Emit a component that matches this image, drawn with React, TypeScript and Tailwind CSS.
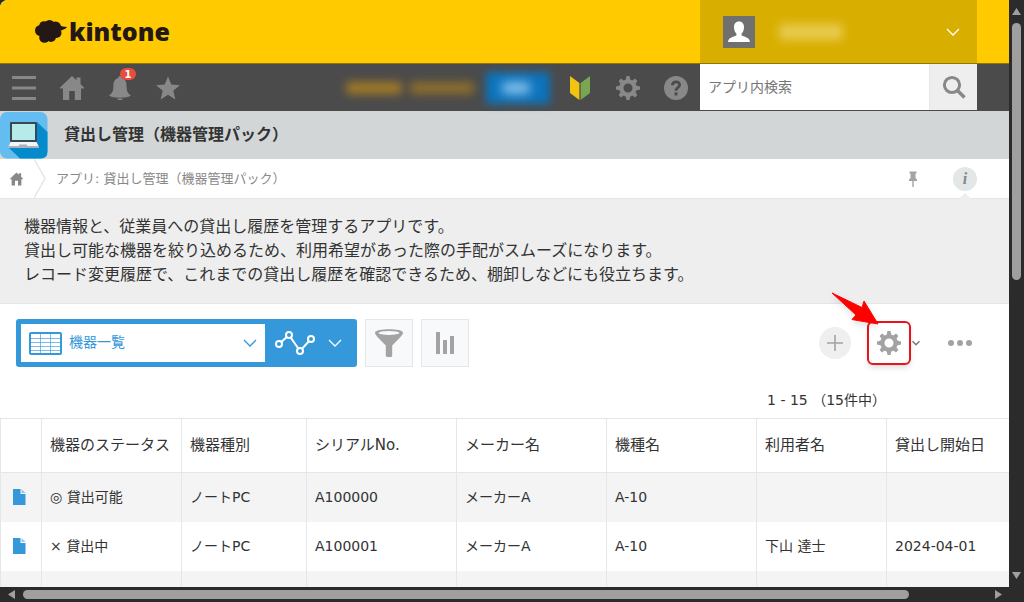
import type { ReactNode } from "react";

interface RecordRow {
  status: string;
  kind: string;
  serial: string;
  maker: string;
  model: string;
  user: string;
  startDate: string;
}

const columns = [
  { label: "機器のステータス", width: "w-[140px]" },
  { label: "機器種別", width: "w-[125px]" },
  { label: "シリアルNo.", width: "w-[150px]" },
  { label: "メーカー名", width: "w-[150px]" },
  { label: "機種名", width: "w-[150px]" },
  { label: "利用者名", width: "w-[130px]" },
  { label: "貸出し開始日", width: "w-auto" },
];

const records: RecordRow[] = [
  { status: "◎ 貸出可能", kind: "ノートPC", serial: "A100000", maker: "メーカーA", model: "A-10", user: "", startDate: "" },
  { status: "× 貸出中", kind: "ノートPC", serial: "A100001", maker: "メーカーA", model: "A-10", user: "下山 達士", startDate: "2024-04-01" },
  { status: "", kind: "", serial: "", maker: "", model: "", user: "", startDate: "" },
];

function GearIcon() {
  return (
    <svg viewBox="-12 -12 24 24" className="size-6">
      <circle r="6.6" fill="none" stroke="currentColor" strokeWidth="4.2" />
      {[0, 90, 180, 270].map((angle) => (
        <path key={angle} d="M-2.4 -8 L-1.5 -12 H1.5 L2.4 -8 Z" fill="currentColor" transform={`rotate(${angle})`} />
      ))}
      {[45, 135, 225, 315].map((angle) => (
        <path key={angle} d="M-2.4 -8 L-1.7 -11.6 H1.7 L2.4 -8 Z" fill="currentColor" transform={`rotate(${angle})`} />
      ))}
    </svg>
  );
}

function HouseIcon({ className }: { className: string }) {
  return (
    <svg viewBox="0 0 24 24" className={className} fill="currentColor">
      <path d="M12 0 L16.5 4.3 V1.5 H20.5 V8 L24 11.5 V12.5 H21 V24 H14.8 V15 H9.2 V24 H3 V12.5 H0 V11.5 Z" />
    </svg>
  );
}

function ChevronIcon({ className, strokeWidth = 1.3 }: { className: string; strokeWidth?: number }) {
  return (
    <svg viewBox="0 0 14 8" className={className} fill="none" stroke="currentColor">
      <path d="M1 1 L7 7 L13 1" strokeWidth={strokeWidth} />
    </svg>
  );
}

function FileIcon() {
  return (
    <svg viewBox="0 0 13 16" className="ml-3 block h-4 w-[13px]">
      <path d="M0 0 H7.5 V5 H12.5 V16 H0 Z" fill="#3498db" />
      <path d="M8.5 0 L12.5 4 H8.5 Z" fill="#8fc7ee" />
    </svg>
  );
}

function NavButton({ label, children }: { label: string; children: ReactNode }) {
  return (
    <button type="button" aria-label={label} className="relative flex h-[47px] w-12 items-center justify-center text-[#888]">
      {children}
    </button>
  );
}

function Header() {
  return (
    <header className="flex h-16 shrink-0 items-stretch border-b border-[#8f7510] bg-[#ffcb00]">
      <a href="#home" className="flex flex-1 items-center gap-0.5 pl-[35px] text-[#231815]">
        <svg viewBox="0 0 32 24" className="h-6 w-8" fill="currentColor">
          <circle cx="5.5" cy="10.5" r="5.500" />
          <circle cx="9" cy="6" r="4.800" />
          <circle cx="14.500" cy="5.500" r="5.500" />
          <circle cx="20.500" cy="7" r="5.500" />
          <circle cx="21.500" cy="13" r="5" />
          <circle cx="16" cy="17" r="5" />
          <circle cx="9.500" cy="17.500" r="5.300" />
          <circle cx="13" cy="12" r="7" />
          <path d="M24 5 C27 7 29 6.600 32 7 C31 8.800 29 9.200 25.500 11 Z" />
        </svg>
        <span className="font-['Open_Sans','Noto_Sans',sans-serif] text-[25px] font-extrabold">kintone</span>
      </a>
      <button type="button" aria-label="ユーザーメニュー" className="flex w-[277px] items-center bg-[#d8af00] px-[17px] pl-[23px]">
        <svg viewBox="0 0 32 32" className="size-8">
          <rect width="32" height="32" fill="#707070" />
          <path d="M16 5.5 C19.5 5.5 21 8 21 11 C21 14 20 16.4 18.6 17.6 V19.6 C22 21.2 26.6 21.6 27 26 H5 C5.4 21.6 10 21.2 13.4 19.6 V17.6 C12 16.4 11 14 11 11 C11 8 12.5 5.5 16 5.5 Z" fill="#fff" />
        </svg>
        <span className="ml-6 h-4 w-16 rounded bg-[#efd66f]/70 blur-[5px]" />
        <ChevronIcon className="ml-auto h-2 w-3.5 text-white" />
      </button>
      <div className="w-8" />
    </header>
  );
}

function NavBar() {
  return (
    <nav className="flex h-[47px] shrink-0 items-center bg-[#4b4b4b]">
      <NavButton label="メニュー">
        <svg viewBox="0 0 24 24" className="size-6" fill="currentColor">
          <path d="M0 0 H24 V3 H0 Z M0 10.5 H24 V13.5 H0 Z M0 21 H24 V24 H0 Z" />
        </svg>
      </NavButton>
      <NavButton label="ポータル">
        <HouseIcon className="size-6" />
      </NavButton>
      <NavButton label="通知">
        <svg viewBox="0 0 24 24" className="size-6" fill="currentColor">
          <path d="M12 0 C13 0 13.6 .7 13.6 1.8 C18 3.2 18.6 7 18.6 10.5 C18.6 15 19.6 17.2 23 19.6 C21 21 17 21.8 12 21.8 C7 21.8 3 21 1 19.6 C4.4 17.2 5.4 15 5.4 10.5 C5.4 7 6 3.2 10.4 1.8 C10.4 .7 11 0 12 0 Z" />
          <path d="M9 22.4 H15 C14.6 23.6 13.2 24 12 24 C10.8 24 9.4 23.6 9 22.4 Z" />
        </svg>
        <span className="absolute top-1 right-2 flex h-3 w-4 items-center justify-center rounded-full bg-[#e74c3c] text-[10px] font-bold text-white">1</span>
      </NavButton>
      <NavButton label="お気に入り">
        <svg viewBox="0 0 24 24" className="size-6" fill="currentColor">
          <path d="M12 .5 L15.3 8.6 L23.8 9.2 L17.3 14.8 L19.4 23.5 L12 18.8 L4.6 23.5 L6.7 14.8 L.2 9.2 L8.7 8.6 Z" />
        </svg>
      </NavButton>

      <div className="ml-auto flex items-center">
        <span className="mr-2 h-3 w-14 rounded bg-[#a37b26] blur-[5px]" />
        <span className="mr-3 h-3 w-16 rounded bg-[#8e6f2c] blur-[5px]" />
        <button type="button" aria-label="購入" className="mr-1.5 flex h-8 w-16 items-center justify-center bg-[#0b73bd] blur-[4px]">
          <span className="mr-1 h-3 w-7 rounded bg-[#8cc4ec] blur-[3px]" />
        </button>
        <NavButton label="はじめに">
          <svg viewBox="0 0 24 24" className="size-6">
            <path d="M2 0 L11.4 7 V24 L2 17 Z" fill="#f1c40f" />
            <path d="M22 0 L12.6 7 V24 L22 17 Z" fill="#7ba651" />
          </svg>
        </NavButton>
        <NavButton label="設定">
          <GearIcon />
        </NavButton>
        <NavButton label="ヘルプ">
          <svg viewBox="0 0 24 24" className="size-6">
            <circle cx="12" cy="12" r="12" fill="#888" />
            <path d="M8.4 9.3 C8.6 4.8 15.8 4.9 15.6 9 C15.5 11.7 12 11.4 12 14.8" fill="none" stroke="#4b4b4b" strokeWidth="2.8" />
            <rect x="10.5" y="16.4" width="3" height="3" fill="#4b4b4b" />
          </svg>
        </NavButton>
      </div>

      <form className="flex h-full w-[277px] pb-px">
        <input
          type="search"
          aria-label="アプリ内検索"
          placeholder="アプリ内検索"
          className="min-w-0 flex-1 bg-white px-2 text-sm text-[#333] placeholder:text-[#757575]"
        />
        <button type="button" aria-label="検索" className="flex w-12 items-center justify-center border-l border-[#e3e7e8] bg-[#eeeeee] text-[#888]">
          <svg viewBox="0 0 24 24" className="size-6" fill="none" stroke="currentColor">
            <circle cx="10" cy="10" r="7.6" strokeWidth="3" />
            <path d="M15.5 15.5 L22.5 22.5" strokeWidth="3.6" />
          </svg>
        </button>
      </form>
      <div className="w-8 shrink-0" />
    </nav>
  );
}

function AppTitle() {
  return (
    <div className="flex h-12 shrink-0 items-center gap-4 bg-[#d3d6d7]">
      <svg viewBox="0 0 48 48" className="size-12">
        <rect y="1" width="47.5" height="46.5" rx="7" fill="#64bdf0" />
        <path d="M37 11 L47.5 21 V40.5 Q47.5 47.5 40.5 47.5 H20 L9 37 Z" fill="#058bcb" />
        <rect x="10" y="11" width="27" height="20" rx="1" fill="#3b4657" />
        <rect x="12" y="13" width="23" height="16" fill="#b5ece8" />
        <path d="M10.500 31 H36.500 L39 36 H8.500 Z" fill="#f3f5f7" />
        <path d="M8.500 35 H39 V37 H8.500 Z" fill="#aab2bb" />
        <rect x="19" y="33.500" width="8" height="1.500" fill="#aab2bb" />
      </svg>
      <h1 className="text-base font-bold text-[#333]">貸出し管理（機器管理パック）</h1>
    </div>
  );
}

function Breadcrumb() {
  return (
    <div className="flex h-10 shrink-0 items-center border-b border-[#e3e7e8] bg-white text-[13px] text-[#888]">
      <a href="#portal" aria-label="ポータル" className="pl-2.5">
        <HouseIcon className="h-3.5 w-[13px]" />
      </a>
      <svg viewBox="0 0 12 39" className="ml-[11px] h-[39px] w-3" fill="none" stroke="#e3e7e8" strokeWidth="1.5">
        <path d="M0 0 L11 19.5 L0 39" />
      </svg>
      <a href="#app" className="ml-2.5">アプリ: 貸出し管理（機器管理パック）</a>
      <button type="button" aria-label="ピン留め" className="ml-auto">
        <svg viewBox="0 0 8 16" className="h-4 w-2" fill="#a3a3a3">
          <path d="M.5 .5 H7.500 V2.500 H6.500 V7 L8 8.500 V10 H4.700 V16 H3.300 V10 H0 V8.500 L1.500 7 V2.500 H.500 Z" />
        </svg>
      </button>
      <button type="button" aria-label="アプリの説明" className="relative mr-8 ml-9 flex size-6 items-center justify-center rounded-full bg-[#e3e7e8] font-['Liberation_Serif',serif] text-base font-bold text-[#888] italic">
        i
        <span className="absolute top-7 left-1.5 size-3 rotate-45 bg-[#eee] [clip-path:polygon(0_0,100%_0,0_100%)]" />
      </button>
    </div>
  );
}

function Toolbar() {
  return (
    <div className="flex shrink-0 items-center px-4 pt-[15px]">
      <div className="flex h-12 w-[341px] items-center rounded-[3px] bg-[#3498db] p-[5px]">
        <div className="flex h-full w-[244px] items-center bg-white px-2 text-[#3498db]">
          <svg viewBox="0 0 33 23" className="h-[23px] w-[33px]" fill="none" stroke="currentColor">
            <rect x="1" y="1" width="31" height="21" rx="1" strokeWidth="2" />
            <path d="M1 6.5 H32 M1 10.500 H32 M1 14.500 H32 M1 18.500 H32 M11.500 1 V22 M21.500 1 V22" opacity=".65" />
          </svg>
          <select aria-label="一覧" className="mb-0.5 ml-[7px] flex-1 appearance-none bg-transparent text-sm">
            <option>機器一覧</option>
          </select>
          <ChevronIcon className="h-2 w-3.5" />
        </div>
        <button type="button" aria-label="グラフ" className="flex flex-1 items-center justify-between px-2.5 text-white">
          <svg viewBox="0 0 40 24" className="h-6 w-10" fill="#3498db" stroke="currentColor" strokeWidth="2">
            <path d="M4 13 L14 4 L25 20 L36 8" />
            <circle cx="4" cy="13" r="3" />
            <circle cx="14" cy="4" r="3" />
            <circle cx="25" cy="20" r="3" />
            <circle cx="36" cy="8" r="3" />
          </svg>
          <ChevronIcon className="h-2 w-3.5" />
        </button>
      </div>
      <button type="button" aria-label="絞り込む" className="ml-2 flex size-12 items-center justify-center border border-[#e3e7e8] bg-[#f7f9fa]">
        <svg viewBox="0 0 28 28" className="size-7">
          <path d="M0 3.500 C0 -1 28 -1 28 3.500 C28 6 25 8.500 17.200 16.500 V26.500 Q17.200 28 15.700 28 H12.300 Q10.800 28 10.800 26.500 V16.500 C3 8.500 0 6 0 3.500 Z" fill="#a3a3a3" />
          <ellipse cx="14" cy="3.900" rx="10.500" ry="2" fill="#f7f9fa" />
        </svg>
      </button>
      <button type="button" aria-label="集計する" className="ml-2 flex size-12 items-center justify-center border border-[#e3e7e8] bg-[#f7f9fa]">
        <svg viewBox="0 0 18 22" className="h-[22px] w-[18px]" fill="#a3a3a3">
          <path d="M0 0 H4 V22 H0 Z M7 8 H11 V22 H7 Z M14 4 H18 V22 H14 Z" />
        </svg>
      </button>

      <div className="ml-auto flex items-center pr-[21px] text-[#a3a3a3]">
        <button type="button" aria-label="レコードを追加する" className="flex size-8 items-center justify-center rounded-full bg-[#efefef]">
          <svg viewBox="0 0 16 16" className="size-4" stroke="currentColor" strokeWidth="1.6">
            <path d="M8 0 V16 M0 8 H16" />
          </svg>
        </button>
        <div className="relative ml-4">
          <button type="button" aria-label="アプリを設定" className="flex size-11 items-center justify-center rounded-md border-2 border-[#e8141c] shadow-md">
            <GearIcon />
          </button>
          <svg viewBox="0 0 48 34" className="absolute -top-[30px] -left-9 h-[34px] w-12 drop-shadow-md">
            <path d="M1 2 L31 16.500 L33 10 L47 33 L21 28.500 L25 24 Z" fill="#f00" stroke="#f00" strokeLinejoin="round" />
          </svg>
        </div>
        <ChevronIcon className="ml-px h-1.5 w-2 text-[#777]" strokeWidth={2.4} />
        <button type="button" aria-label="その他" className="ml-7">
          <svg viewBox="0 0 24 6" className="h-1.5 w-6" fill="currentColor">
            <circle cx="3" cy="3" r="3" />
            <circle cx="12" cy="3" r="3" />
            <circle cx="21" cy="3" r="3" />
          </svg>
        </button>
      </div>
    </div>
  );
}

function RecordTable() {
  return (
    <table className="w-full table-fixed border-collapse text-left text-sm text-[#333]">
      <thead>
        <tr className="h-[54px] border-y border-[#e3e7e8] text-[15px]">
          <th aria-label="詳細" className="w-[41px] border-l border-[#e3e7e8]" />
          {columns.map((column) => (
            <th key={column.label} className={`${column.width} border-l border-[#e3e7e8] px-2 font-normal whitespace-nowrap`}>
              {column.label}
            </th>
          ))}
        </tr>
      </thead>
      <tbody>
        {records.map((record, index) => (
          <tr key={index} className="h-[49px] odd:bg-[#f4f4f4]">
            <td className="border-l border-[#e3e7e8]">
              <FileIcon />
            </td>
            {Object.values(record).map((value, cell) => (
              <td key={cell} className="border-l border-[#e3e7e8] px-2 whitespace-nowrap">
                {value}
              </td>
            ))}
          </tr>
        ))}
      </tbody>
    </table>
  );
}

export default function App() {
  return (
    <div className="flex h-screen flex-col overflow-hidden bg-[#2b2b2b] font-['DejaVu_Sans','Noto_Sans_CJK_JP',sans-serif]" lang="ja">
      <div className="flex min-h-0 flex-1">
        <div className="flex min-w-0 flex-1 flex-col overflow-hidden rounded-tl-lg bg-white">
          <Header />
          <NavBar />
          <AppTitle />
          <Breadcrumb />
          <div className="shrink-0 border-b border-[#e3e7e8] bg-[#eeeeee] px-6 py-4 text-base leading-6 text-[#333]">
            <p>機器情報と、従業員への貸出し履歴を管理するアプリです。</p>
            <p>貸出し可能な機器を絞り込めるため、利用希望があった際の手配がスムーズになります。</p>
            <p>レコード変更履歴で、これまでの貸出し履歴を確認できるため、棚卸しなどにも役立ちます。</p>
          </div>
          <Toolbar />
          <p className="mt-[23px] mb-2 shrink-0 pr-[123px] text-right text-sm text-[#333]">1 - 15 （15件中）</p>
          <RecordTable />
        </div>

        {/* vertical scrollbar */}
        <div className="flex w-[15px] shrink-0 flex-col items-center pt-2 pb-2">
          <svg viewBox="0 0 9 7" className="h-[7px] w-[9px]" fill="#9f9f9f">
            <path d="M4.500 0 L9 7 H0 Z" />
          </svg>
          <div className="mt-2 h-[257px] w-[9px] rounded-full bg-[#9f9f9f]" />
          <svg viewBox="0 0 9 7" className="mt-auto h-[7px] w-[9px]" fill="#9f9f9f">
            <path d="M0 0 H9 L4.500 7 Z" />
          </svg>
        </div>
      </div>

      {/* horizontal scrollbar */}
      <div className="flex h-[15px] shrink-0 items-center pr-[22px] pl-2">
        <svg viewBox="0 0 7 9" className="h-[9px] w-[7px]" fill="#9f9f9f">
          <path d="M7 0 V9 L0 4.500 Z" />
        </svg>
        <div className="ml-2 h-[9px] w-[886px] rounded-full bg-[#9f9f9f]" />
        <svg viewBox="0 0 7 9" className="ml-auto h-[9px] w-[7px]" fill="#9f9f9f">
          <path d="M0 0 L7 4.500 L0 9 Z" />
        </svg>
      </div>
    </div>
  );
}
